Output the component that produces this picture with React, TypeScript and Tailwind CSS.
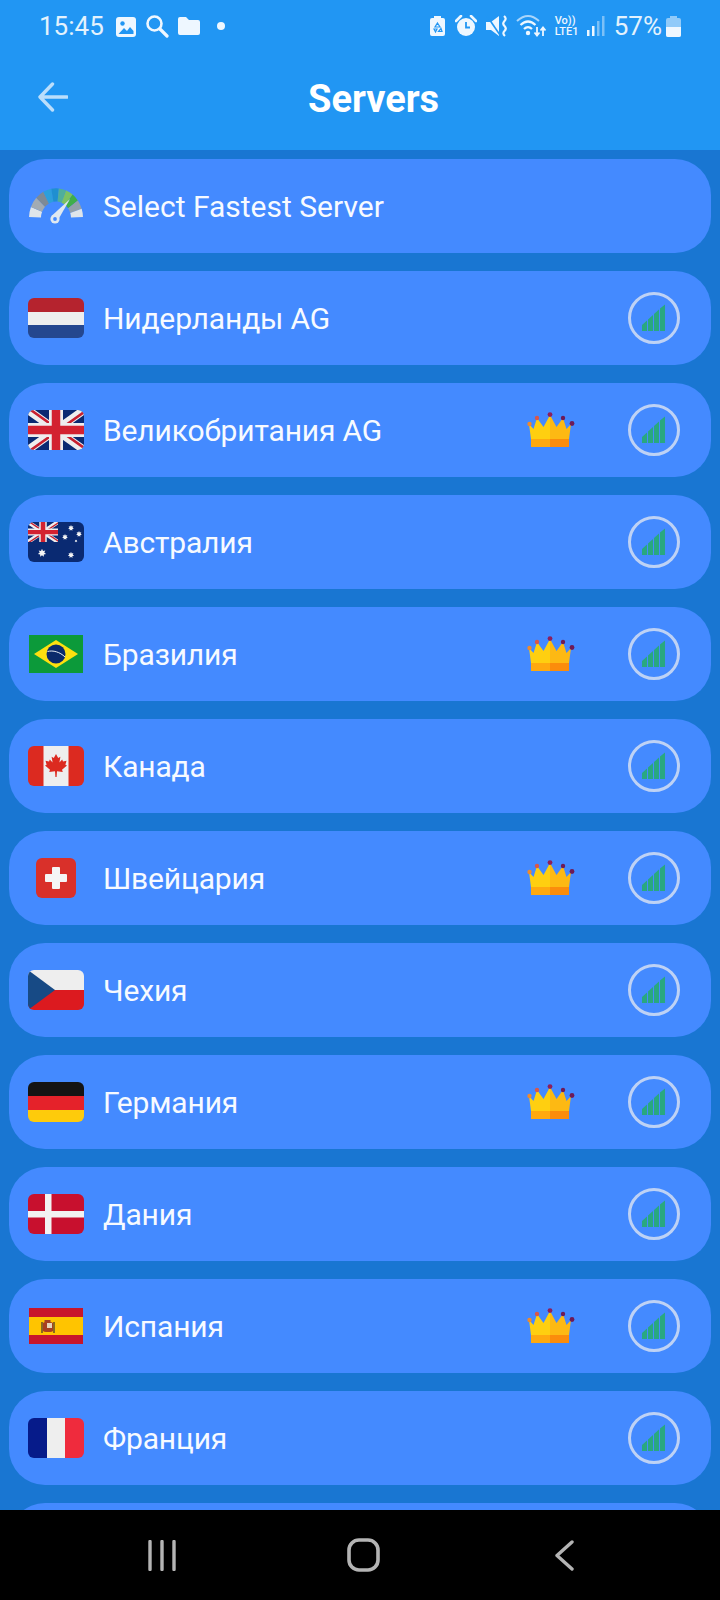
import React from "react";

const UnionJack = () => (
  <>
    <rect width="56" height="40" fill="#0a2a72" />
    <path d="M0 0L56 40M56 0L0 40" stroke="#eeeeee" strokeWidth="8" />
    <path d="M0 0L28 20M56 40L28 20" stroke="#c8202f" strokeWidth="2.6" transform="translate(1.2 -1.2)" />
    <path d="M56 0L28 20M0 40L28 20" stroke="#c8202f" strokeWidth="2.6" transform="translate(1.2 1.2)" />
    <path d="M28 0V40M0 20H56" stroke="#eeeeee" strokeWidth="14" />
    <path d="M28 0V40M0 20H56" stroke="#d32230" strokeWidth="8.5" />
  </>
);

const Star = ({ x, y, r }: { x: number; y: number; r: number }) => {
  const pts: string[] = [];
  for (let i = 0; i < 14; i++) {
    const a = (i * Math.PI) / 7 - Math.PI / 2;
    const rr = i % 2 === 0 ? r : r * 0.55;
    pts.push(`${(x + rr * Math.cos(a)).toFixed(2)},${(y + rr * Math.sin(a)).toFixed(2)}`);
  }
  return <polygon points={pts.join(" ")} fill="#f5f5f5" />;
};

const Flag = ({ children, w = 56, h = 40, round = true }: { children: React.ReactNode; w?: number; h?: number; round?: boolean }) => (
  <svg width={w} height={h} viewBox={`0 0 ${w} ${h}`} className={round ? "block rounded-[6px]" : "block"}>
    {children}
  </svg>
);

const flags: Record<string, React.ReactNode> = {
  nl: (
    <Flag>
      <rect width="56" height="14" fill="#b5232e" />
      <rect y="14" width="56" height="13" fill="#eeeeee" />
      <rect y="27" width="56" height="13" fill="#24478f" />
    </Flag>
  ),
  uk: (
    <Flag>
      <UnionJack />
    </Flag>
  ),
  au: (
    <Flag>
      <rect width="56" height="40" fill="#0a2a72" />
      <svg x="0" y="0" width="30" height="20" viewBox="0 0 56 40" preserveAspectRatio="none">
        <UnionJack />
      </svg>
      <Star x={14} y={31} r={4.2} />
      <Star x={43} y={33} r={3.2} />
      <Star x={43} y={6} r={3} />
      <Star x={37} y={15} r={3} />
      <Star x={51} y={12} r={3} />
      <Star x={48} y={19} r={1.4} />
    </Flag>
  ),
  br: (
    <Flag w={54} h={38} round={false}>
      <rect width="54" height="38" fill="#0c9a3a" />
      <polygon points="5,19 27,5 49,19 27,33" fill="#fde00f" />
      <circle cx="27" cy="19" r="9.5" fill="#0b2a6b" />
      <path d="M18.5 16.5C24 15 31 17 36 22" stroke="#e8eef5" strokeWidth="1" fill="none" />
    </Flag>
  ),
  ca: (
    <Flag>
      <rect width="56" height="40" fill="#dc2a20" />
      <rect x="15.5" width="25" height="40" fill="#eeeeee" />
      <polygon
        fill="#dc2a20"
        points="28,8 30.2,12 32.4,10.8 31.4,16.5 34.2,13.6 35,15.5 38.5,14.8 37.4,18.8 39,19.6 34,23.8 34.8,26 29,25.2 28.6,31 27.4,31 27,25.2 21.2,26 22,23.8 17,19.6 18.6,18.8 17.5,14.8 21,15.5 21.8,13.6 24.6,16.5 23.6,10.8 25.8,12"
      />
    </Flag>
  ),
  ch: (
    <Flag w={40} h={40}>
      <rect width="40" height="40" fill="#d9302a" />
      <rect x="16" y="9" width="8" height="22" rx="1" fill="#f5f5f5" />
      <rect x="9" y="16" width="22" height="8" rx="1" fill="#f5f5f5" />
    </Flag>
  ),
  cz: (
    <Flag>
      <rect width="56" height="20" fill="#eeeeee" />
      <rect y="20" width="56" height="20" fill="#dc1a1f" />
      <polygon points="0,0 27,20 0,40" fill="#174a85" />
    </Flag>
  ),
  de: (
    <Flag>
      <rect width="56" height="14" fill="#141414" />
      <rect y="14" width="56" height="14" fill="#e5222a" />
      <rect y="28" width="56" height="12" fill="#fecb0b" />
    </Flag>
  ),
  dk: (
    <Flag>
      <rect width="56" height="40" fill="#c8102e" />
      <rect x="17" width="6.5" height="40" fill="#f2f2f2" />
      <rect y="17" width="56" height="6.5" fill="#f2f2f2" />
    </Flag>
  ),
  es: (
    <Flag w={54} h={36} round={false}>
      <rect width="54" height="36" fill="#c8152b" />
      <rect y="9" width="54" height="18" fill="#ffc400" />
      <rect x="13" y="14" width="12" height="10" rx="4" fill="#a8401f" />
      <rect x="18" y="15" width="5" height="5" fill="#e6d5b8" />
      <rect x="12" y="14" width="2" height="11" fill="#8a6a1e" />
      <rect x="24" y="14" width="2" height="11" fill="#8a6a1e" />
      <rect x="15.5" y="12" width="6" height="2.5" fill="#a8401f" />
    </Flag>
  ),
  fr: (
    <Flag>
      <rect width="19" height="40" fill="#061b8a" />
      <rect x="19" width="18" height="40" fill="#eeeeee" />
      <rect x="37" width="19" height="40" fill="#ef2b3d" />
    </Flag>
  ),
};

const seg = (cx: number, cy: number, r0: number, r1: number, a0: number, a1: number) => {
  const p = (r: number, a: number) => {
    const t = (a * Math.PI) / 180;
    return `${(cx + r * Math.cos(t)).toFixed(2)} ${(cy - r * Math.sin(t)).toFixed(2)}`;
  };
  return `M${p(r0, a0)}L${p(r1, a0)}A${r1} ${r1} 0 0 1 ${p(r1, a1)}L${p(r0, a1)}A${r0} ${r0} 0 0 0 ${p(r0, a0)}Z`;
};

const Gauge = () => {
  const cols = ["#dfe5ea", "#a2abb3", "#7d8a96", "#2c9fdc", "#1f8fd0", "#4fae9c", "#7cc261", "#3fae49", "#93a0aa", "#dfe5ea"];
  const edges = [178, 158, 137, 118, 100, 84, 68, 52, 36, 18, 2];
  return (
    <svg width="56" height="38" viewBox="0 0 56 38" className="block">
      <g transform="translate(0 31) scale(1 1.1) translate(0 -31)">
        {cols.map((c, i) => (
          <path key={i} d={seg(28, 31, 15, 27, edges[i], edges[i + 1])} fill={c} />
        ))}
      </g>
      <polygon points="23.5,29 30,33 42,12" fill="#dfe8f0" />
      <circle cx="27" cy="32" r="4.6" fill="#dfe8f0" />
      <circle cx="27" cy="32" r="1.9" fill="#448aff" />
    </svg>
  );
};

const Crown = () => (
  <svg width="48" height="36" viewBox="0 0 48 36" className="block">
    <polygon points="2,12 6.5,17 10,6 16.5,15 23,3 23,27 4,27" fill="#ffcf10" />
    <polygon points="23,3 29.5,15 36,6 39.5,17 44,12 42,27 23,27" fill="#fdb913" />
    <rect x="4" y="27" width="19" height="8" fill="#ffa90f" />
    <rect x="23" y="27" width="19" height="8" fill="#fb8c0c" />
    <circle cx="2.5" cy="12" r="2.2" fill="#ef8a2e" />
    <circle cx="10" cy="6" r="2.2" fill="#d9574a" />
    <circle cx="23" cy="2.6" r="2.4" fill="#8c1f5e" />
    <circle cx="36" cy="6" r="2.2" fill="#6e1a58" />
    <circle cx="45" cy="11.5" r="2.4" fill="#6e1a58" />
  </svg>
);

const Signal = () => (
  <div className="w-[52px] h-[52px] rounded-full border-[3px] border-[#bed2f5] flex items-center justify-center">
    <svg width="24" height="28" viewBox="0 0 24 28" className="block">
      <path d="M0 27V21L5 16.5V27Z" fill="#29a880" />
      <path d="M6 27V15.5L11 11V27Z" fill="#29a880" />
      <path d="M12 27V10L17 5.5V27Z" fill="#29a880" />
      <path d="M18 27V4.5L23 0.5V27Z" fill="#29a880" />
    </svg>
  </div>
);

const Row = ({ icon, name, premium, hideSignal, tight = true }: { icon: React.ReactNode; name: string; premium?: boolean; hideSignal?: boolean; tight?: boolean }) => (
  <div className="h-[94px] shrink-0 rounded-[36px] bg-[#448aff] flex items-center pl-[19px] pr-[31px]">
    <div className="w-[56px] flex items-center justify-center">{icon}</div>
    <div className={tight ? "ml-[19px] pt-[1px] flex-1 text-[30px] leading-none tracking-[-0.15px] text-[#f7faff] font-['Roboto',sans-serif]" : "ml-[19px] pt-[1px] flex-1 text-[30px] leading-none text-[#f7faff] font-['Roboto',sans-serif]"}>{name}</div>
    {premium && (
      <div className="mr-[53px]">
        <Crown />
      </div>
    )}
    {!hideSignal && <Signal />}
  </div>
);

const servers: [string, string, boolean][] = [
  ["nl", "Нидерланды AG", false],
  ["uk", "Великобритания AG", true],
  ["au", "Австралия", false],
  ["br", "Бразилия", true],
  ["ca", "Канада", false],
  ["ch", "Швейцария", true],
  ["cz", "Чехия", false],
  ["de", "Германия", true],
  ["dk", "Дания", false],
  ["es", "Испания", true],
  ["fr", "Франция", false],
];

const StatusLeft = () => (
  <div className="flex items-center">
    <span className="text-[26px] leading-none text-[#e3f2fd] font-['Roboto',sans-serif] w-[77px]">15:45</span>
    <svg width="20" height="20" viewBox="0 0 20 20" className="block mt-[1px]">
      <rect width="20" height="20" rx="3" fill="#eef7ff" />
      <circle cx="6.5" cy="6.5" r="2.2" fill="#2196f3" />
      <path d="M2.5 17L8 11L11 14L14 10L17.5 14V17Z" fill="#2196f3" />
    </svg>
    <svg width="24" height="24" viewBox="0 0 24 24" className="block ml-[9px]">
      <circle cx="9.5" cy="9.5" r="7" fill="none" stroke="#eef7ff" strokeWidth="2.6" />
      <path d="M15 15L22 22" stroke="#eef7ff" strokeWidth="3.2" strokeLinecap="round" />
    </svg>
    <svg width="22" height="18" viewBox="0 0 22 18" className="block ml-[9px]">
      <path d="M0 2Q0 0 2 0H8L11 3H20Q22 3 22 5V16Q22 18 20 18H2Q0 18 0 16Z" fill="#eef7ff" />
    </svg>
    <span className="block w-[8px] h-[8px] rounded-full bg-[#eef7ff] ml-[17px]" />
  </div>
);

const StatusRight = () => (
  <div className="flex items-center">
    <svg width="15" height="20" viewBox="0 0 15 20" className="block">
      <path d="M4 0H11V2H13Q15 2 15 4V18Q15 20 13 20H2Q0 20 0 18V4Q0 2 2 2H4Z" fill="#eef7ff" />
      <path d="M7.5 7L10 11H5ZM4 13L7 13L5.5 16ZM11 12.5L12 15.5H8.5Z" fill="none" stroke="#2196f3" strokeWidth="1.2" />
    </svg>
    <svg width="22" height="22" viewBox="0 0 22 22" className="block ml-[10px]">
      <circle cx="11" cy="12" r="9" fill="#eef7ff" />
      <path d="M1 6L6 1M21 6L16 1" stroke="#eef7ff" strokeWidth="2.6" strokeLinecap="round" />
      <path d="M11 7V12.5H15" stroke="#2196f3" strokeWidth="1.8" fill="none" />
    </svg>
    <svg width="22" height="22" viewBox="0 0 22 22" className="block ml-[9px]">
      <path d="M0 7H5L13 1V21L5 15H0Z" fill="#eef7ff" />
      <path d="M1 1L14 20" stroke="#2196f3" strokeWidth="1.6" />
      <path d="M18 1Q21 3.5 18.5 6Q16 8.5 18.5 11Q21 13.5 18.5 16Q16 18.5 19 21" stroke="#eef7ff" strokeWidth="2.2" fill="none" />
    </svg>
    <svg width="32" height="24" viewBox="0 0 32 24" className="block ml-[8px]">
      <path d="M1 7Q12 -3 23 7" stroke="#a9d5fa" strokeWidth="2" fill="none" />
      <path d="M4.5 11Q12 4 19.5 11" stroke="#eef7ff" strokeWidth="2.2" fill="none" />
      <path d="M8 15Q12 11 16 15" stroke="#eef7ff" strokeWidth="2.2" fill="none" />
      <circle cx="12" cy="19" r="2.2" fill="#eef7ff" />
      <path d="M21 13V21M18.5 18.5L21 21.5L23.5 18.5" stroke="#eef7ff" strokeWidth="1.8" fill="none" />
      <path d="M27 22V14M24.5 16.5L27 13.5L29.5 16.5" stroke="#eef7ff" strokeWidth="1.8" fill="none" />
    </svg>
    <div className="ml-[7px] w-[26px] flex flex-col items-start font-['Roboto',sans-serif] font-medium text-[#eef7ff] text-[11px] leading-[11px]">
      <span>Vo))</span>
      <span>LTE1</span>
    </div>
    <svg width="18" height="20" viewBox="0 0 18 20" className="block ml-[6px]">
      <rect x="0" y="14" width="2.5" height="6" fill="#eef7ff" />
      <rect x="5" y="10" width="2.5" height="10" fill="#eef7ff" />
      <rect x="10" y="5" width="2.5" height="15" fill="#7cc0f7" />
      <rect x="15" y="0" width="2.5" height="20" fill="#7cc0f7" />
    </svg>
    <span className="text-[26px] leading-none text-[#e3f2fd] font-['Roboto',sans-serif] ml-[9px]">57%</span>
    <svg width="15" height="21" viewBox="0 0 15 21" className="block ml-[4px]">
      <path d="M4 0H11V2H13Q15 2 15 4V19Q15 21 13 21H2Q0 21 0 19V4Q0 2 2 2H4Z" fill="#90caf9" />
      <path d="M0 11H15V19Q15 21 13 21H2Q0 21 0 19Z" fill="#eef7ff" />
    </svg>
  </div>
);

export default function App() {
  return (
    <div className="w-[720px] h-[1600px] flex flex-col overflow-hidden bg-[#1976d2]">
      <header className="h-[150px] shrink-0 bg-[#2196f3] flex flex-col">
        <div className="h-[52px] flex items-center justify-between pl-[39px] pr-[39px]">
          <StatusLeft />
          <StatusRight />
        </div>
        <div className="flex items-center pl-[38px] mt-[23px]">
          <svg width="30" height="30" viewBox="0 0 30 30" className="block">
            <path d="M29 15H2.5M14.5 2L2 15L14.5 28" stroke="#bbdefb" strokeWidth="3.4" fill="none" strokeLinecap="round" strokeLinejoin="round" />
          </svg>
          <span className="ml-[240px] pt-[4px] text-[38px] leading-[40px] font-bold text-white font-['Roboto',sans-serif]">Servers</span>
        </div>
      </header>
      <main className="flex-1 min-h-0 overflow-hidden flex flex-col gap-[18px] px-[9px] pt-[9px]">
        <Row icon={<Gauge />} name="Select Fastest Server" hideSignal tight={false} />
        {servers.map(([k, n, p]) => (
          <Row key={k} icon={flags[k]} name={n} premium={p} />
        ))}
        <div className="h-[94px] shrink-0 rounded-[36px] bg-[#448aff]" />
      </main>
      <nav className="h-[90px] shrink-0 bg-black flex items-start pt-[30px]">
        <svg width="28" height="31" viewBox="0 0 28 31" className="block ml-[148px]">
          <path d="M2 1.5V29.5M14 1.5V29.5M26 1.5V29.5" stroke="#b4b4b4" strokeWidth="3.4" strokeLinecap="round" />
        </svg>
        <svg width="33" height="34" viewBox="0 0 33 34" className="block ml-[171px] -mt-[2px]">
          <rect x="2" y="2" width="29" height="30" rx="10" fill="none" stroke="#b4b4b4" strokeWidth="3.6" />
        </svg>
        <svg width="21" height="31" viewBox="0 0 21 31" className="block ml-[174px]">
          <path d="M18 2L3 15.5L18 29" stroke="#b4b4b4" strokeWidth="3.4" fill="none" strokeLinecap="round" strokeLinejoin="round" />
        </svg>
      </nav>
    </div>
  );
}
